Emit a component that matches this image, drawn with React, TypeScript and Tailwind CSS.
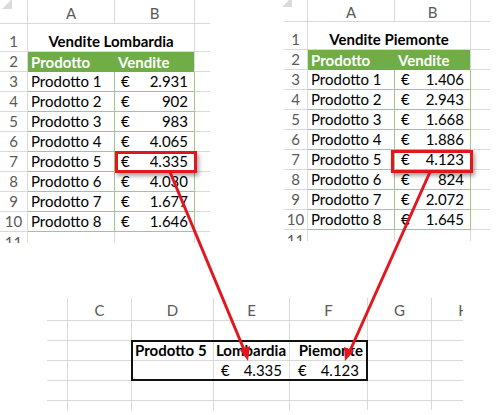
import React from 'react';

const GL = 'border-[#d9d9d9]';
const GR = 'border-[#a3c585]';

type SheetProps = {
  title: string;
  values: string[];
  rnW: string;
  aW: string;
  bW: string;
  cW: string;
  abW: string;
  headH: string;
  hl: string;
};

function Corner() {
  return (
    <svg width="24" height="22" viewBox="0 0 24 22" className="absolute right-[2px] bottom-[3px]">
      <polygon points="1,11 11,1 11,11" fill="#dadada" />
    </svg>
  );
}

function RN({ n, w, green, h = 'h-full' }: { n: number | string; w: string; green?: boolean; h?: string }) {
  return (
    <div className={`${w} ${h} shrink-0 border-r border-b ${green ? GR : GL} flex items-end justify-center leading-[19px] text-[#595959]`}>
      <span className={green ? '' : ''}>{n}</span>
    </div>
  );
}

function TableSheet({ title, values, rnW, aW, bW, cW, abW, headH, hl }: SheetProps) {
  return (
    <div className="relative flex flex-col">
      {/* column header */}
      <div className={`flex ${headH}`}>
        <div className={`${rnW} shrink-0 relative border-r border-b ${GL}`}>
          <Corner />
        </div>
        <div className={`${aW} shrink-0 border-r border-b ${GL} flex items-center justify-center pt-[3px] text-[#595959]`}>A</div>
        <div className={`${bW} shrink-0 border-r border-b ${GL} flex items-center justify-center pt-[3px] text-[#595959]`}>B</div>
        <div className={`${cW} shrink-0 border-b ${GL}`} />
      </div>
      {/* row 1 */}
      <div className="flex h-[28px]">
        <RN n={1} w={rnW} />
        <div className={`${abW} shrink-0 border-r border-b ${GL} flex items-end justify-center leading-[19px] font-bold`}>{title}</div>
        <div className={`${cW} shrink-0 border-b ${GL}`} />
      </div>
      {/* row 2 - table header */}
      <div className="flex h-[20px]">
        <RN n={2} w={rnW} />
        <div className={`${aW} shrink-0 bg-[#70ad47] text-white font-bold flex items-end pl-[3px] leading-[20px]`}>Prodotto</div>
        <div className={`${bW} shrink-0 bg-[#70ad47] text-white font-bold flex items-end pl-[3px] leading-[20px] border-r ${GL}`}>Vendite</div>
        <div className={`${cW} shrink-0 border-b ${GL}`} />
      </div>
      {values.map((v, i) => (
        <div key={i} className="flex h-[20px]">
          <RN n={i + 3} w={rnW} />
          <div className={`${aW} shrink-0 border-b border-r ${GR} flex items-end pl-[3px] leading-[19px]`}>Prodotto {i + 1}</div>
          <div className={`${bW} shrink-0 border-b border-r ${GR} flex items-end justify-between pl-[6px] pr-[6px] leading-[19px]`}>
            <span>€</span>
            <span>{v}</span>
          </div>
          <div className={`${cW} shrink-0 border-b ${GL}`} />
        </div>
      ))}
      {/* row 11 partial */}
      <div className="flex h-[11px] overflow-hidden">
        <div className={`${rnW} shrink-0 border-r ${GL} flex justify-center leading-[19px] text-[#595959] pt-[1px]`}>11</div>
        <div className={`${aW} shrink-0 border-r ${GL}`} />
        <div className={`${bW} shrink-0 border-r ${GL}`} />
        <div className={`${cW} shrink-0`} />
      </div>
      <div className={`absolute ${hl} border-[3px] border-[#e3161d] shadow-[2px_3px_4px_rgba(0,0,0,0.35)]`} />
    </div>
  );
}

function BottomSheet() {
  const cols = [
    { w: 'w-[21px]', l: '' },
    { w: 'w-[64px]', l: 'C' },
    { w: 'w-[82px]', l: 'D' },
    { w: 'w-[76px]', l: 'E' },
    { w: 'w-[78px]', l: 'F' },
    { w: 'w-[64px]', l: 'G' },
  ];
  const emptyRow = (h: string, last?: boolean) => (
    <div className={`flex ${h}`}>
      {cols.map((c, i) => (
        <div key={i} className={`${c.w} shrink-0 border-r ${last ? '' : 'border-b'} ${GL}`} />
      ))}
      <div className={`w-[31px] shrink-0 ${last ? '' : 'border-b'} ${GL}`} />
    </div>
  );
  return (
    <div className="relative ml-[47px] mt-[55px] flex flex-col w-[415px]">
      <div className="flex h-[23px]">
        {cols.map((c, i) => (
          <div key={i} className={`${c.w} shrink-0 border-r border-b ${GL} flex items-center justify-center pt-[3px] text-[#595959]`}>{c.l}</div>
        ))}
        <div className={`w-[31px] shrink-0 border-b ${GL} overflow-hidden`}>
          <div className="w-[64px] h-full flex items-center justify-center pt-[3px] text-[#595959]">H</div>
        </div>
      </div>
      {emptyRow('h-[20px]')}
      <div className="flex h-[20px]">
        <div className={`w-[21px] shrink-0 border-r border-b ${GL}`} />
        <div className={`w-[64px] shrink-0 border-r border-b ${GL}`} />
        <div className={`w-[82px] shrink-0 border-r border-b ${GL} flex items-end pl-[3px] leading-[19px] font-bold`}>Prodotto 5</div>
        <div className={`w-[76px] shrink-0 border-r border-b ${GL} flex items-end justify-end pr-[3px] leading-[19px] font-bold`}>Lombardia</div>
        <div className={`w-[78px] shrink-0 border-r border-b ${GL} flex items-end justify-end pr-[4px] leading-[19px] font-bold`}>Piemonte</div>
        <div className={`w-[64px] shrink-0 border-r border-b ${GL}`} />
        <div className={`w-[31px] shrink-0 border-b ${GL}`} />
      </div>
      <div className="flex h-[20px]">
        <div className={`w-[21px] shrink-0 border-r border-b ${GL}`} />
        <div className={`w-[64px] shrink-0 border-r border-b ${GL}`} />
        <div className={`w-[82px] shrink-0 border-r border-b ${GL}`} />
        <div className={`w-[76px] shrink-0 border-r border-b ${GL} flex items-end justify-between pl-[7px] pr-[7px] leading-[19px]`}>
          <span>€</span>
          <span>4.335</span>
        </div>
        <div className={`w-[78px] shrink-0 border-r border-b ${GL} flex items-end justify-between pl-[8px] pr-[8px] leading-[19px]`}>
          <span>€</span>
          <span>4.123</span>
        </div>
        <div className={`w-[64px] shrink-0 border-r border-b ${GL}`} />
        <div className={`w-[31px] shrink-0 border-b ${GL}`} />
      </div>
      {emptyRow('h-[20px]')}
      {emptyRow('h-[9px]', true)}
      <div className="absolute left-[84px] top-[42px] w-[237px] h-[41px] border-2 border-[#111]" />
    </div>
  );
}

export default function App() {
  return (
    <div className="relative w-[504px] h-[415px] bg-white overflow-hidden text-[15px] text-black font-[family-name:Lato,sans-serif]">
      <div className="flex">
        <TableSheet
          title="Vendite Lombardia"
          values={['2.931', '902', '983', '4.065', '4.335', '4.030', '1.677', '1.646']}
          rnW="w-[28px]"
          aW="w-[87px]"
          bW="w-[80px]"
          cW="w-[15px]"
          abW="w-[167px]"
          headH="h-[24px]"
          hl="left-[115px] top-[151px] w-[82px] h-[22px]"
        />
        <div className="ml-[74px] flex flex-col">
          <TableSheet
            title="Vendite Piemonte"
            values={['1.406', '2.943', '1.668', '1.886', '4.123', '824', '2.072', '1.645']}
            rnW="w-[24px]"
            aW="w-[87px]"
            bW="w-[76px]"
            cW="w-[19px]"
            abW="w-[163px]"
            headH="h-[22px]"
            hl="left-[107px] top-[150px] w-[82px] h-[23px]"
          />
        </div>
      </div>
      <BottomSheet />
      <svg className="absolute inset-0 pointer-events-none" width="504" height="415" viewBox="0 0 504 415">
        <line x1="170" y1="172" x2="245" y2="352" stroke="#e3161d" strokeWidth="3" />
        <polygon points="248,361 240,350 250,346" fill="#e3161d" />
        <line x1="430" y1="172" x2="349" y2="353" stroke="#e3161d" strokeWidth="3" />
        <polygon points="345,361 344,347 354,351" fill="#e3161d" />
      </svg>
    </div>
  );
}
